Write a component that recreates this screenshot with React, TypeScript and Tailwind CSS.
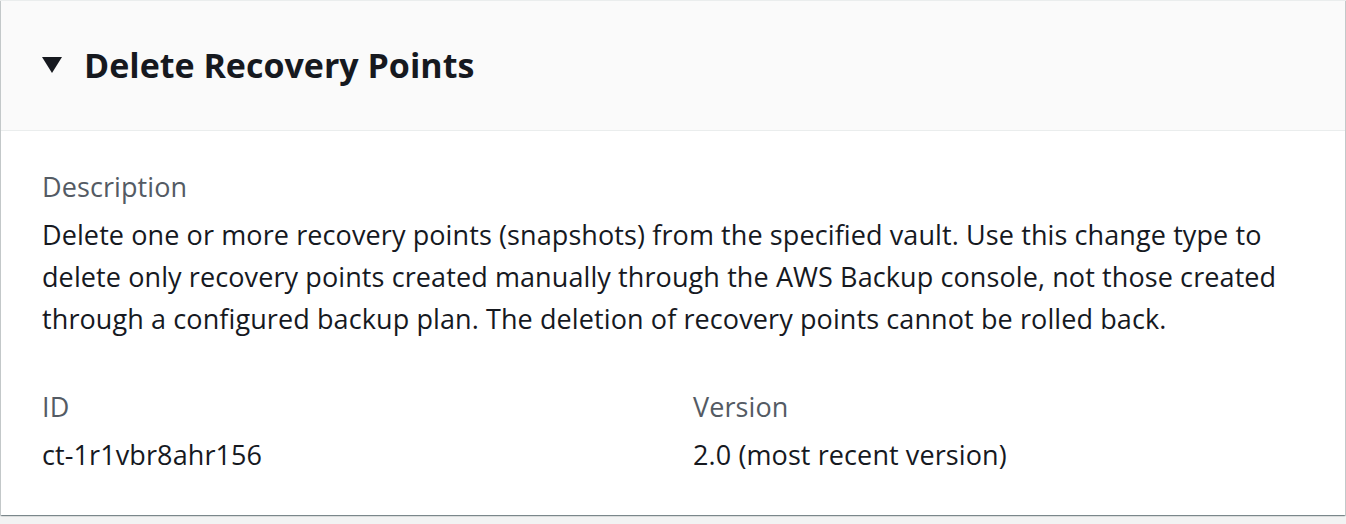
import React from "react";

const DESCRIPTION =
  "Delete one or more recovery points (snapshots) from the specified vault. Use this change type to delete only recovery points created manually through the AWS Backup console, not those created through a configured backup plan. The deletion of recovery points cannot be rolled back.";

export default function App() {
  return (
    <div className="h-[524px] w-[1346px] bg-[#f2f3f3] font-['Open_Sans',sans-serif] text-[#16191f]">
      <section className="mx-[1px] border-t border-[#eaeded] bg-white shadow-[0_1px_1px_0_rgba(0,28,36,0.3),1px_1px_1px_0_rgba(0,28,36,0.15),-1px_1px_1px_0_rgba(0,28,36,0.15)]">
        <header className="flex h-[130px] items-center gap-[22px] border-b border-[#eaeded] bg-[#fafafa] px-[41px]">
          <svg width="20" height="16" viewBox="0 0 20 16" className="-mt-[2px] shrink-0">
            <polygon points="0,0 20,0 10,16" fill="#16191f" />
          </svg>
          <h2 className="-mt-[1px] text-[34px] font-bold leading-[42px]">Delete Recovery Points</h2>
        </header>

        <div className="px-[41px] pb-[39px] pt-[35px] text-[27px] leading-[42px] tracking-[0.1px]">
          <Field label="Description" value={DESCRIPTION} />
          <div className="mt-[46px] grid grid-cols-2 gap-10">
            <Field label="ID" value="ct-1r1vbr8ahr156" />
            <Field label="Version" value="2.0 (most recent version)" />
          </div>
        </div>
      </section>
    </div>
  );
}

function Field({ label, value }: { label: string; value: string }) {
  return (
    <div className="flex flex-col gap-[6px]">
      <div className="text-[#545b64]">{label}</div>
      <div>{value}</div>
    </div>
  );
}
